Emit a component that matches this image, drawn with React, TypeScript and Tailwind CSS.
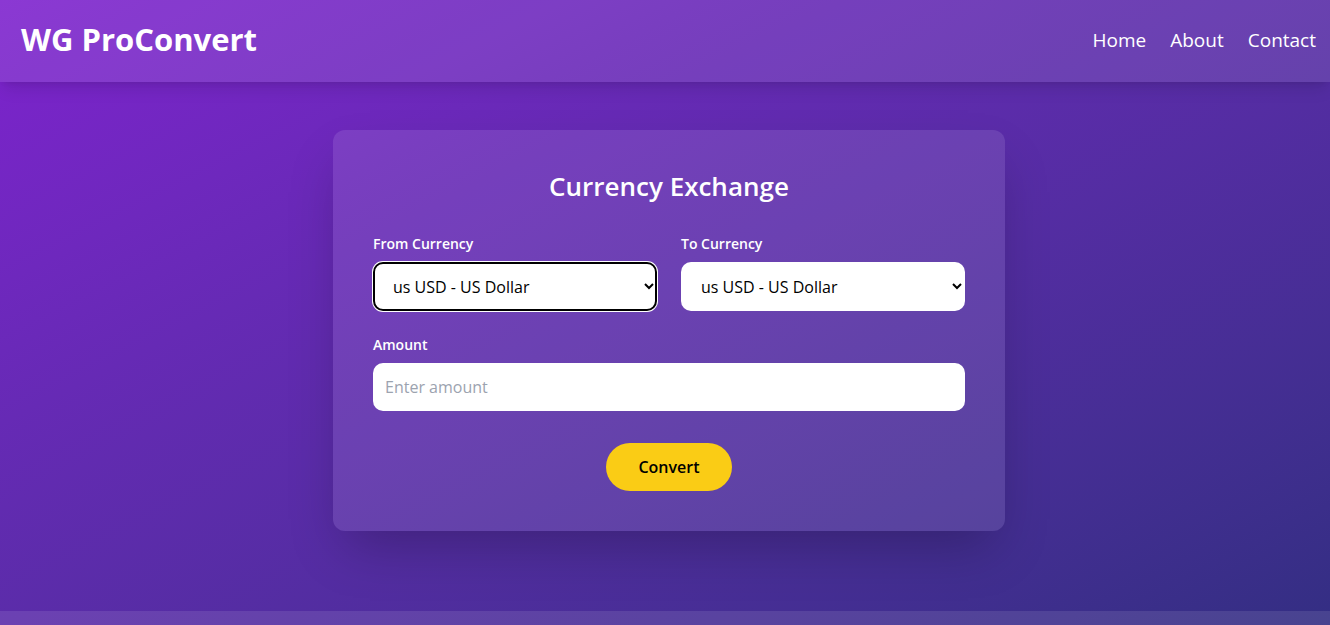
import { useState } from "react"

const currencies = [
    { code: "USD", name: "US Dollar", flag: "us" },
    { code: "EUR", name: "Euro", flag: "eu" },
    { code: "GBP", name: "British Pound", flag: "gb" },
    { code: "INR", name: "Indian Rupee", flag: "in" },
    { code: "JPY", name: "Japanese Yen", flag: "jp" },
]

const App = () => {
    const [from, setFrom] = useState("USD")
    const [to, setTo] = useState("USD")
    const [amount, setAmount] = useState("")

    return (
        <div className="min-h-screen flex flex-col bg-gradient-to-br from-[#7e22ce] to-[#312e81] text-white font-['Open_Sans',sans-serif]">
            <header className="h-[82px] flex items-center justify-between pl-[21px] pr-[14px] bg-white/10 shadow-lg">
                <h1 className="text-[31px] leading-9 font-bold -mt-1">WG ProConvert</h1>
                <nav className="flex gap-6 text-[19px] -mt-[2px]">
                    <a href="#">Home</a>
                    <a href="#">About</a>
                    <a href="#">Contact</a>
                </nav>
            </header>

            <main className="flex-1 flex justify-center pt-12 pb-20 pl-6 pr-4">
                <div className="w-full max-w-2xl h-fit bg-white/10 rounded-xl shadow-2xl p-10">
                    <h2 className="text-[26px] leading-8 font-semibold text-center mb-8">Currency Exchange</h2>
                    <div className="grid grid-cols-2 gap-6 mb-6">
                        <div>
                            <label className="block text-sm font-semibold mb-2">From Currency</label>
                            <select
                                value={from}
                                onChange={(e) => setFrom(e.target.value)}
                                className="w-full h-[49px] px-4 rounded-[10px] bg-white text-black text-base ring-2 ring-inset ring-black shadow-[0_0_0_1px_white] outline-none"
                            >
                                {currencies.map((c) => (
                                    <option key={c.code} value={c.code}>{c.flag} {c.code} - {c.name}</option>
                                ))}
                            </select>
                        </div>
                        <div>
                            <label className="block text-sm font-semibold mb-2">To Currency</label>
                            <select
                                value={to}
                                onChange={(e) => setTo(e.target.value)}
                                className="w-full h-[49px] px-4 rounded-[10px] bg-white text-black text-base outline-none"
                            >
                                {currencies.map((c) => (
                                    <option key={c.code} value={c.code}>{c.flag} {c.code} - {c.name}</option>
                                ))}
                            </select>
                        </div>
                    </div>
                    <label className="block text-sm font-semibold mb-2">Amount</label>
                    <input
                        type="number"
                        value={amount}
                        onChange={(e) => setAmount(e.target.value)}
                        placeholder="Enter amount"
                        className="w-full h-12 px-3 rounded-[10px] bg-white text-black placeholder-[#9ca3af] outline-none"
                    />
                    <div className="flex justify-center mt-8">
                        <button className="h-12 px-8 rounded-full bg-[#facc15] text-black font-semibold">Convert</button>
                    </div>
                </div>
            </main>

            <footer className="h-14 bg-white/10"></footer>
        </div>
    )
}

export default App
